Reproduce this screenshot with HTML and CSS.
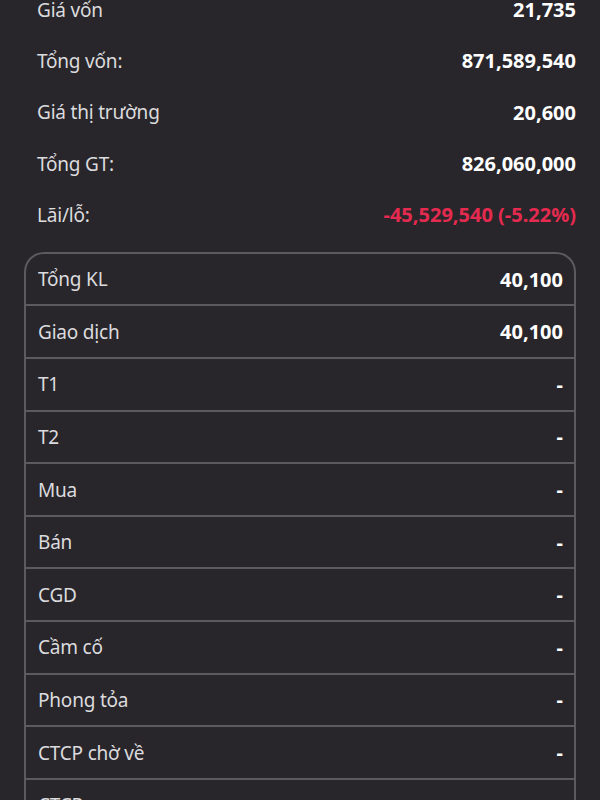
FILE: index.html
```html
<!DOCTYPE html>
<html lang="vi">

<head>
    <meta charset="UTF-8" />
    <meta name="viewport" content="width=device-width, initial-scale=1.0" />
    <title>Chi tiết danh mục</title>
    <link rel="stylesheet" href="styles.css">
</head>

<body>
    <main class="page">
        <!-- Summary -->
        <section class="summary">
            <div class="sum-row"><span class="label">Giá vốn</span><span class="value">21,735</span></div>
            <div class="sum-row"><span class="label">Tổng vốn:</span><span class="value">871,589,540</span></div>
            <div class="sum-row"><span class="label">Giá thị trường</span><span class="value">20,600</span></div>
            <div class="sum-row"><span class="label">Tổng GT:</span><span class="value">826,060,000</span></div>
            <div class="sum-row"><span class="label">Lãi/lỗ:</span><span class="value loss">-45,529,540 (-5.22%)</span></div>
        </section>

        <!-- Volume table -->
        <section class="volume">
            <div class="vol-row"><span class="label">Tổng KL</span><span class="value">40,100</span></div>
            <div class="vol-row"><span class="label">Giao dịch</span><span class="value">40,100</span></div>
            <div class="vol-row"><span class="label">T1</span><span class="value">-</span></div>
            <div class="vol-row"><span class="label">T2</span><span class="value">-</span></div>
            <div class="vol-row"><span class="label">Mua</span><span class="value">-</span></div>
            <div class="vol-row"><span class="label">Bán</span><span class="value">-</span></div>
            <div class="vol-row"><span class="label">CGD</span><span class="value">-</span></div>
            <div class="vol-row"><span class="label">Cầm cố</span><span class="value">-</span></div>
            <div class="vol-row"><span class="label">Phong tỏa</span><span class="value">-</span></div>
            <div class="vol-row"><span class="label">CTCP chờ về</span><span class="value">-</span></div>
            <div class="vol-row"><span class="label">CTCP</span><span class="value">-</span></div>
        </section>
    </main>
</body>

</html>
```

FILE: styles.css
```css
* {
    margin: 0;
    padding: 0;
    box-sizing: border-box;
}

html,
body {
    background-color: #28262b;
    overflow: hidden;
}

body {
    font-family: "Noto Sans", "Open Sans", sans-serif;
    font-size: 19px;
    color: #dcdbde;
}

.page {
    padding: 0 24px;
    margin-top: -16px;
}

.label {
    letter-spacing: -0.2px;
}

.sum-row {
    display: flex;
    justify-content: space-between;
    align-items: center;
    height: 51.3px;
    padding-left: 13px;
}

.value {
    color: #fff;
    font-weight: bold;
    font-size: 20px;
}

.value.loss {
    color: #e52a50;
}

/* Table with rounded top */
.volume {
    margin-top: 12px;
    border: 2px solid #5c5a60;
    border-bottom: none;
    border-radius: 20px 20px 0 0;
}

.vol-row {
    display: flex;
    justify-content: space-between;
    align-items: center;
    height: 52.6px;
    padding: 0 11px 0 12px;
    border-bottom: 2px solid #5c5a60;
}

.vol-row:first-child {
    height: 52px;
}
```
